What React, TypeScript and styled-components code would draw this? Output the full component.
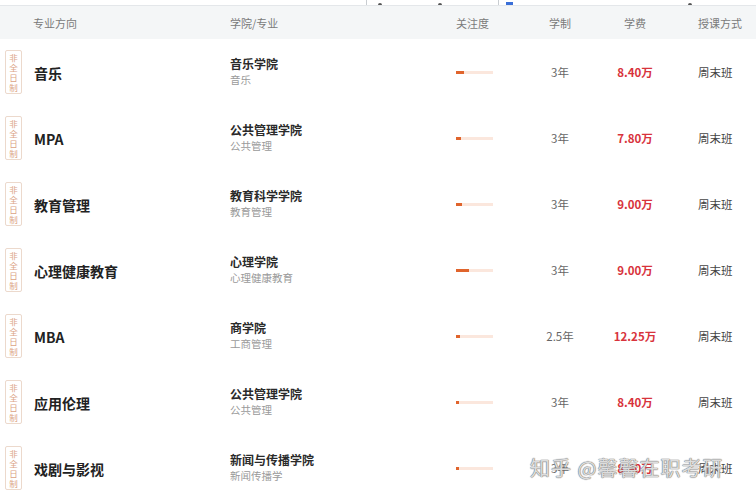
import React from 'react'
import styled, { createGlobalStyle } from 'styled-components'

const GlobalStyle = createGlobalStyle`
  html, body {
    margin: 0;
    padding: 0;
    background: #ffffff;
  }
  body {
    font-family: 'Noto Sans CJK SC', 'Noto Sans', sans-serif;
    width: 756px;
    height: 500px;
    overflow: hidden;
  }
`

interface Program {
  name: string
  college: string
  major: string
  heat: number
  years: string
  fee: string
  method: string
}

const programs: Program[] = [
  { name: '音乐', college: '音乐学院', major: '音乐', heat: 8, years: '3年', fee: '8.40万', method: '周末班' },
  { name: 'MPA', college: '公共管理学院', major: '公共管理', heat: 5, years: '3年', fee: '7.80万', method: '周末班' },
  { name: '教育管理', college: '教育科学学院', major: '教育管理', heat: 6, years: '3年', fee: '9.00万', method: '周末班' },
  { name: '心理健康教育', college: '心理学院', major: '心理健康教育', heat: 13, years: '3年', fee: '9.00万', method: '周末班' },
  { name: 'MBA', college: '商学院', major: '工商管理', heat: 4, years: '2.5年', fee: '12.25万', method: '周末班' },
  { name: '应用伦理', college: '公共管理学院', major: '公共管理', heat: 3, years: '3年', fee: '8.40万', method: '周末班' },
  { name: '戏剧与影视', college: '新闻与传播学院', major: '新闻传播学', heat: 3, years: '3年', fee: '8.40万', method: '周末班' },
]

export default function App() {
  return (
    <Page>
      <GlobalStyle />
      <TopStrip>
        <StripMark $left={366} $tone="line" />
        <StripMark $left={378} $tone="dark" />
        <StripMark $left={438} $tone="dark" />
        <StripMark $left={498} $tone="line" />
        <StripMark $left={506} $tone="blue" />
        <StripMark $left={688} $tone="dark" />
      </TopStrip>
      <Table>
        <HeaderRow>
          <HeadCell $pad={33}>专业方向</HeadCell>
          <HeadCell>学院/专业</HeadCell>
          <HeadCell>关注度</HeadCell>
          <HeadCell $center>学制</HeadCell>
          <HeadCell $center>学费</HeadCell>
          <HeadCell $pad={18}>授课方式</HeadCell>
        </HeaderRow>
        {programs.map((p) => (
          <Row key={p.name}>
            <NameCell>
              <Badge>
                <span>非</span>
                <span>全</span>
                <span>日</span>
                <span>制</span>
              </Badge>
              <Name>{p.name}</Name>
            </NameCell>
            <CollegeCell>
              <College>{p.college}</College>
              <Major>{p.major}</Major>
            </CollegeCell>
            <div>
              <Track>
                <Fill style={{ width: p.heat }} />
              </Track>
            </div>
            <Years>{p.years}</Years>
            <Fee>{p.fee}</Fee>
            <Method>{p.method}</Method>
          </Row>
        ))}
      </Table>
      <Watermark>知乎 @馨馨在职考研</Watermark>
    </Page>
  )
}

const COLUMNS = '230px 226px 74px 60px 90px 1fr'

const Page = styled.div`
  position: relative;
  width: 756px;
  height: 500px;
  overflow: hidden;
  background: #ffffff;
`

const TopStrip = styled.div`
  position: relative;
  height: 5px;
  border-bottom: 1px solid #e4e7ea;
  background: #ffffff;
`

const StripMark = styled.span<{ $left: number; $tone: 'line' | 'dark' | 'blue' }>`
  position: absolute;
  bottom: 0;
  left: ${(p) => p.$left}px;
  width: ${(p) => (p.$tone === 'line' ? 1 : p.$tone === 'blue' ? 7 : 4)}px;
  height: ${(p) => (p.$tone === 'line' ? 5 : p.$tone === 'blue' ? 3 : 2)}px;
  background: ${(p) => (p.$tone === 'line' ? '#c9cdd1' : p.$tone === 'blue' ? '#3a6fd8' : '#555')};
  border-radius: ${(p) => (p.$tone === 'dark' ? '2px 2px 0 0' : '0')};
`

const Table = styled.div`
  display: flex;
  flex-direction: column;
`

const HeaderRow = styled.div`
  display: grid;
  grid-template-columns: ${COLUMNS};
  align-items: center;
  height: 33px;
  background: #f4f6f7;
`

const HeadCell = styled.div<{ $pad?: number; $center?: boolean }>`
  padding-left: ${(p) => p.$pad ?? 0}px;
  font-size: 11px;
  line-height: 16px;
  color: #7a7a7a;
  text-align: ${(p) => (p.$center ? 'center' : 'left')};
`

const Row = styled.div`
  display: grid;
  grid-template-columns: ${COLUMNS};
  align-items: center;
  height: 66px;
  background: #ffffff;
`

const NameCell = styled.div`
  display: flex;
  align-items: center;
  gap: 12px;
  padding-left: 5px;
`

const Badge = styled.div`
  display: flex;
  flex-direction: column;
  align-items: center;
  justify-content: center;
  width: 15px;
  height: 42px;
  border: 1px solid #ecd9cc;
  border-radius: 2px;
  font-size: 8.5px;
  line-height: 10px;
  color: #dba385;
`

const Name = styled.div`
  font-size: 14px;
  font-weight: 700;
  color: #222222;
  margin-top: 2px;
`

const CollegeCell = styled.div`
  display: flex;
  flex-direction: column;
  gap: 2px;
  margin-top: -2px;
`

const College = styled.div`
  font-size: 12px;
  line-height: 15px;
  font-weight: 700;
  color: #2a2a2a;
`

const Major = styled.div`
  font-size: 10.5px;
  line-height: 14px;
  color: #9a9a9a;
`

const Track = styled.div`
  width: 37px;
  height: 3px;
  background: #fbe7dd;
  margin-top: 1px;
`

const Fill = styled.div`
  height: 100%;
  background: #e0642c;
`

const Years = styled.div`
  text-align: center;
  font-size: 11.5px;
  color: #666666;
`

const Fee = styled.div`
  text-align: center;
  font-size: 11.5px;
  font-weight: 700;
  color: #d8333c;
`

const Method = styled.div`
  padding-left: 18px;
  font-size: 11.5px;
  color: #444444;
`

const Watermark = styled.div`
  position: absolute;
  left: 530px;
  top: 455px;
  font-size: 20px;
  line-height: 26px;
  letter-spacing: 1px;
  white-space: nowrap;
  color: rgba(255, 255, 255, 0.75);
  text-shadow: 0 0 1px #777, 0 0 1px #777, 0 0 1px #999;
`
